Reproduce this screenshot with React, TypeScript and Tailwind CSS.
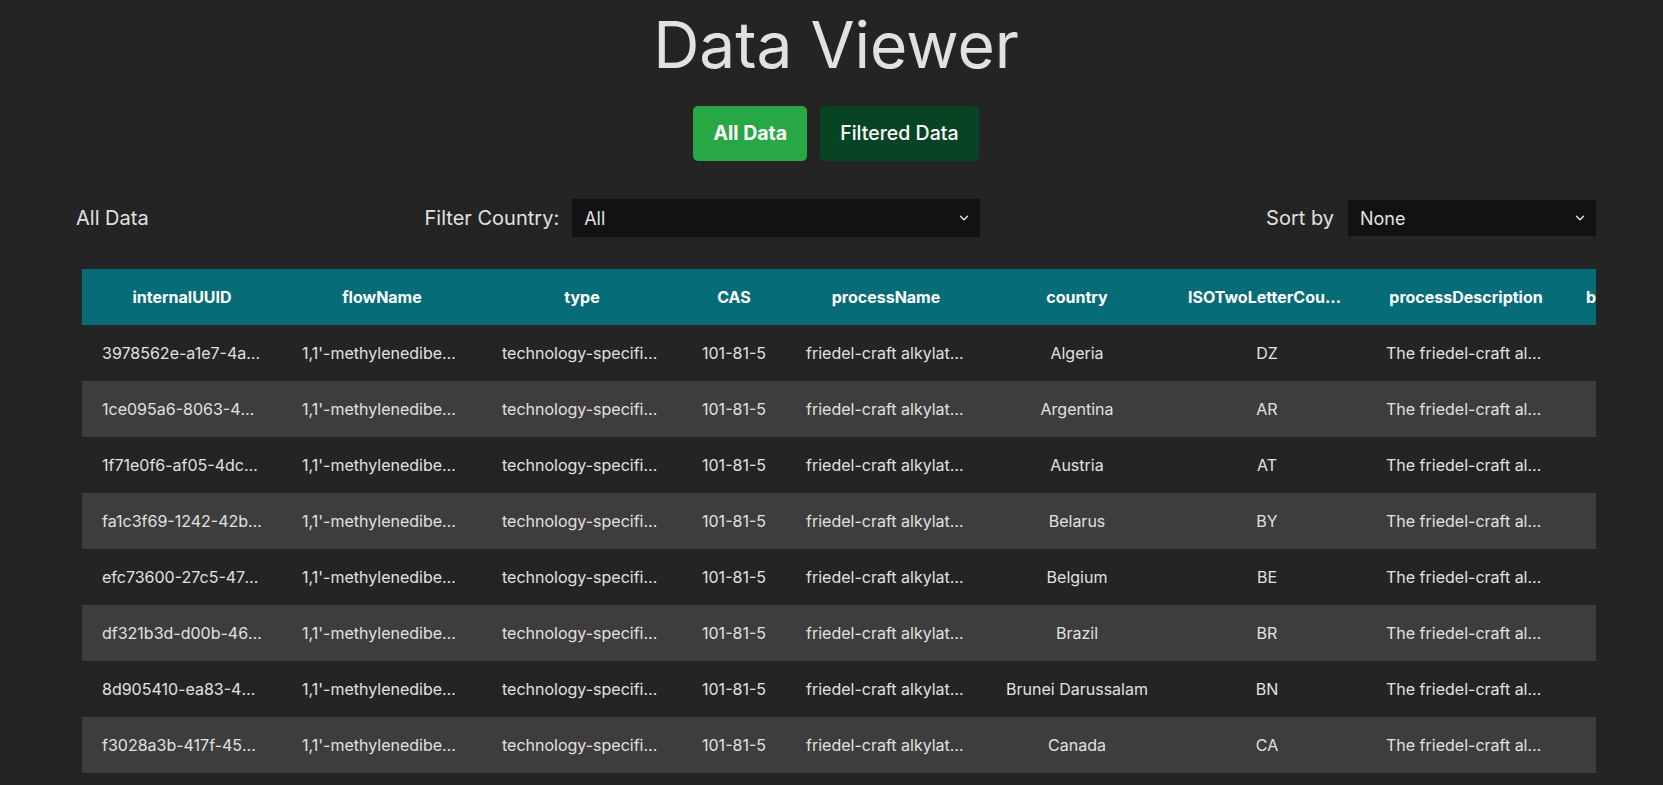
import { ChevronDown } from "lucide-react";

const columns = [
  { key: "internalUUID", width: "w-[200px]" },
  { key: "flowName", width: "w-[200px]" },
  { key: "type", width: "w-[200px]" },
  { key: "CAS", width: "w-[104px]" },
  { key: "processName", width: "w-[200px]" },
  { key: "country", width: "w-[182px]" },
  { key: "ISOTwoLetterCountryCode", width: "w-[198px]" },
  { key: "processDescription", width: "w-[200px]" },
  { key: "bestAvailableTechnology", width: "w-[200px]" },
];

const rows = [
  ["3978562e-a1e7-4a3c-9b1f-2d4e5f6a7b8c", "Algeria", "DZ"],
  ["1ce095a6-8063-4d2a-b7d1-9e8c7a6b5d4e", "Argentina", "AR"],
  ["1f71e0f6-af05-4dc2-8a9b-3c4d5e6f7a8b", "Austria", "AT"],
  ["fa1c3f69-1242-42b8-9c0d-1e2f3a4b5c6d", "Belarus", "BY"],
  ["efc73600-27c5-47a1-b2c3-d4e5f6a7b8c9", "Belgium", "BE"],
  ["df321b3d-d00b-46e7-a8b9-c0d1e2f3a4b5", "Brazil", "BR"],
  ["8d905410-ea83-4c6d-9e0f-1a2b3c4d5e6f", "Brunei Darussalam", "BN"],
  ["f3028a3b-417f-45d9-8e7f-6a5b4c3d2e1f", "Canada", "CA"],
  ["b71c4e2d-93a0-4f18-a6c2-7d8e9f0a1b2c", "Chile", "CL"],
  ["c28d5f3e-04b1-4a29-b7d3-8e9f0a1b2c3d", "China", "CN"],
];

const flowName = "1,1'-methylenedibenzene";
const typeName = "technology-specific process";
const processName = "friedel-craft alkylation of benzene";
const processDescription = "The friedel-craft alkylation of benzene with benzyl chloride";

export default function App() {
  return (
    <div className="h-[785px] overflow-hidden bg-[#242424] font-['Inter',sans-serif] text-[#e1e1e1]">
      <div className="ml-[76px] w-[1520px]">
        <h1 className="pt-[6px] text-center text-[64px] font-normal leading-[77px] text-[#e1e1e1]">
          Data Viewer
        </h1>

        <div className="mt-[23px] flex justify-center gap-[13px]">
          <button className="h-[55px] rounded-[5px] bg-[#28a745] px-5 text-[19.5px] font-bold text-white">
            All Data
          </button>
          <button className="h-[55px] rounded-[5px] bg-[#064424] px-5 text-[19.5px] font-medium text-white">
            Filtered Data
          </button>
        </div>

        <div className="mt-[38px] flex h-[38px] items-center justify-between">
          <span className="text-[20px]">All Data</span>
          <div className="mr-[10px] flex items-center gap-[13px]">
            <label className="text-[20px]">Filter Country:</label>
            <div className="relative">
              <select className="h-[38px] w-[408px] appearance-none bg-[#121212] pl-3 text-[18px] text-[#e1e1e1] outline-none">
                <option>All</option>
              </select>
              <ChevronDown
                size={14}
                strokeWidth={2.5}
                className="pointer-events-none absolute right-[9px] top-[12px] text-[#e1e1e1]"
              />
            </div>
          </div>
          <div className="flex items-center gap-[14px]">
            <label className="text-[20px]">Sort by</label>
            <div className="relative">
              <select className="h-[36px] w-[248px] appearance-none bg-[#121212] pl-3 text-[18px] text-[#e1e1e1] outline-none">
                <option>None</option>
              </select>
              <ChevronDown
                size={14}
                strokeWidth={2.5}
                className="pointer-events-none absolute right-[9px] top-[11px] text-[#e1e1e1]"
              />
            </div>
          </div>
        </div>

        <div className="ml-[6px] mt-[32px] w-[1514px] overflow-x-auto">
          <table className="w-[1684px] table-fixed border-collapse text-[16px]">
            <colgroup>
              {columns.map((c) => (
                <col key={c.key} className={c.width} />
              ))}
            </colgroup>
            <thead>
              <tr className="h-[56px] bg-[#066c78]">
                {columns.map((c) => (
                  <th key={c.key} className="truncate px-5 text-center font-bold text-white">
                    {c.key}
                  </th>
                ))}
              </tr>
            </thead>
            <tbody>
              {rows.map(([uuid, country, iso], i) => (
                <tr key={uuid} className={i % 2 === 1 ? "h-[56px] bg-[#3d3d3d]" : "h-[56px]"}>
                  {[uuid, flowName, typeName, "101-81-5", processName, country, iso, processDescription, "2"].map(
                    (v, j) => (
                      <td key={j} className="truncate px-5 text-center text-[#e1e1e1]">
                        {v}
                      </td>
                    )
                  )}
                </tr>
              ))}
            </tbody>
          </table>
        </div>
      </div>
    </div>
  );
}
